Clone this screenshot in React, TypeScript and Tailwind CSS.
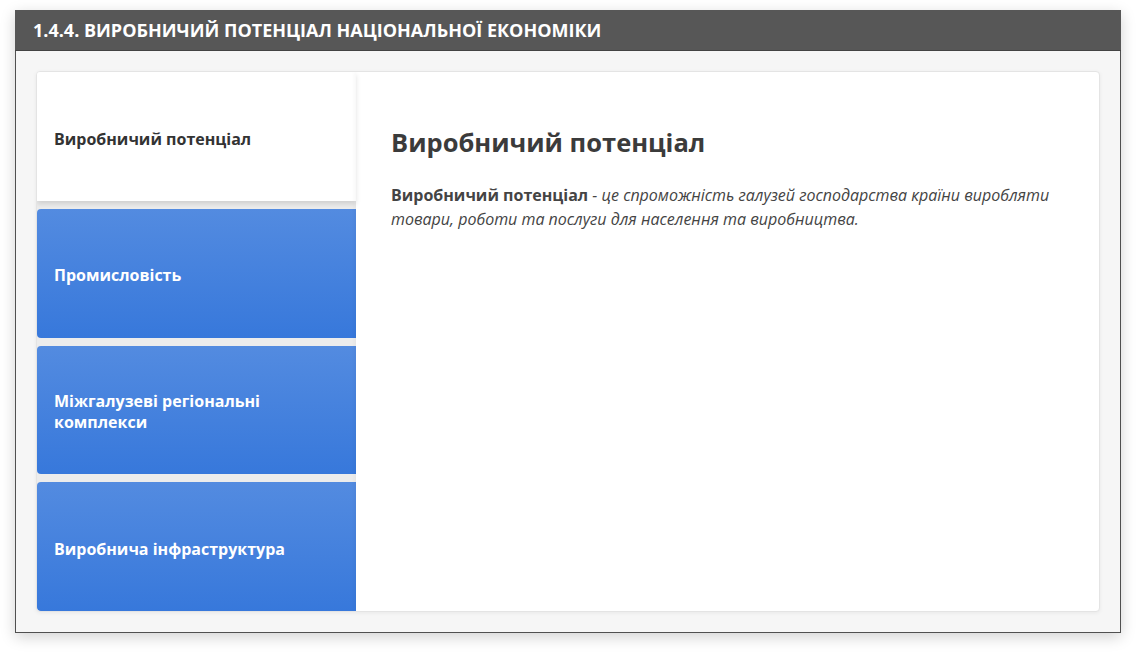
import React from 'react';

const tabs = [
  'Виробничий потенціал',
  'Промисловість',
  'Міжгалузеві регіональні комплекси',
  'Виробнича інфраструктура',
];

const App: React.FC = () => {
  const active = 0;

  return (
    <div className="min-h-[653px] w-full bg-white pl-[15px] pr-[15px] pt-[10px] font-['Open_Sans',sans-serif]">
      <div className="w-[1106px] shadow-[0_4px_14px_rgba(0,0,0,0.18)]">
        {/* Header */}
        <div className="flex h-[41px] items-center bg-[#575757] pl-[18px] border-b border-[#444]">
          <h1 className="text-[18px] font-bold uppercase text-white">
            1.4.4. Виробничий потенціал національної економіки
          </h1>
        </div>

        {/* Body */}
        <div className="border-x border-b border-[#505050] bg-[#f6f6f6] p-[20px]">
          <div className="flex h-[541px] overflow-hidden rounded-[4px] border border-[#e4e4e4] bg-white shadow-[0_1px_4px_rgba(0,0,0,0.06)]">
            {/* Tabs */}
            <div className="flex w-[319px] flex-col gap-[8px] bg-[#ececec]">
              {tabs.map((t, i) => (
                <div
                  key={t}
                  className={
                    i === active
                      ? 'flex flex-1 items-center bg-white pl-[17px] pr-6 pt-[5px] text-[16px] font-bold text-[#333] shadow-[0_3px_5px_rgba(0,0,0,0.12)]'
                      : 'flex flex-1 items-center rounded-l-[4px] bg-gradient-to-b from-[#538be0] to-[#3778db] pl-[17px] pr-6 pt-[5px] text-[16px] font-bold leading-[21px] text-white'
                  }
                >
                  {t}
                </div>
              ))}
            </div>

            {/* Content */}
            <div className="flex-1 pl-[35px] pr-[38px] pt-[52px] shadow-[-2px_0_4px_rgba(0,0,0,0.03)]">
              <h2 className="text-[25.5px] font-bold leading-[36px] text-[#3b3b3b]">
                Виробничий потенціал
              </h2>
              <p className="mt-[23px] text-[16px] leading-[24px] text-[#444]">
                <span className="font-bold">Виробничий потенціал</span>
                <em> - це спроможність галузей господарства країни виробляти товари, роботи та послуги для населення та виробництва.</em>
              </p>
            </div>
          </div>
        </div>
      </div>
    </div>
  );
};

export default App;
